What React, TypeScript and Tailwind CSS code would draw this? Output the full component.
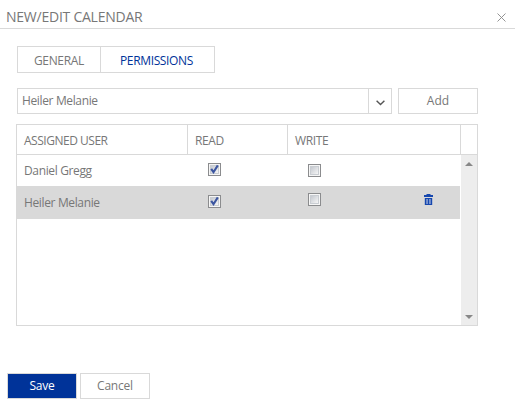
import React from "react";

const users = [
  { name: "Daniel Gregg", read: true, write: false, selected: false },
  { name: "Heiler Melanie", read: true, write: false, selected: true },
];

function Checkbox({ checked }: { checked: boolean }) {
  return (
    <svg width="13" height="13" viewBox="0 0 13 13" className="block" role="checkbox" aria-checked={checked}>
      <defs>
        <linearGradient id="well" x1="0" y1="0" x2="1" y2="1">
          <stop offset="0" stopColor="#c2c6cd" />
          <stop offset="1" stopColor="#f8f8f8" />
        </linearGradient>
      </defs>
      <rect x=".5" y=".5" width="12" height="12" fill="#f6f6f6" stroke="#8b8c8e" />
      <rect x="2.5" y="2.5" width="8" height="8" fill="url(#well)" stroke="#c9cdd2" />
      {checked && <path d="M3.2 5.8 L5.5 9.2 L9.8 2.4" fill="none" stroke="#3b55a0" strokeWidth="2.1" />}
    </svg>
  );
}

function TrashIcon() {
  return (
    <svg width="9" height="11" viewBox="0 0 9 11" className="block">
      <path d="M2.5 0h4v1H9v2H0V1h2.5z" fill="#1647ae" />
      <path d="M.8 4h7.4v7H.8z" fill="#1647ae" />
      <path d="M2.4 5h1.3v5H2.4zM5.3 5h1.3v5H5.3z" fill="#a3b4dc" />
    </svg>
  );
}

export default function App() {
  return (
    <div className="h-[409px] w-[515px] overflow-hidden bg-white font-['Open_Sans','Noto_Sans',sans-serif] text-[12px] leading-4 tracking-[-0.36px] whitespace-nowrap text-[#777777]">
      <header className="flex h-[29px] items-start justify-between border-b border-[#d9d9d9] pl-[6px] pr-[9px]">
        <h1 className="pt-[9px] text-[14px] leading-4 tracking-[-0.24px]">NEW/EDIT CALENDAR</h1>
        <svg width="9" height="9" viewBox="0 0 9 9" className="mt-[13px]">
          <path d="M.5 .5l8 8M8.5 .5l-8 8" stroke="#888" strokeWidth=".9" />
        </svg>
      </header>

      <div className="ml-[17px] mt-[17px] flex h-[27px] w-[198px] border border-[#d9d9d9]">
        <button className="flex w-[83px] items-center border-r border-[#d9d9d9] pl-[16px] pt-[2px]">GENERAL</button>
        <button className="flex flex-1 items-center pl-[19px] pt-[2px] text-[#003399]">PERMISSIONS</button>
      </div>

      <div className="ml-[17px] mt-[15px] flex h-[26px] gap-[6px]">
        <div className="flex w-[375px] border border-[#d9d9d9]">
          <span className="flex flex-1 items-center pl-[4px]">Heiler Melanie</span>
          <button className="flex w-[23px] items-center justify-center border-l border-[#d9d9d9] pt-[4px]">
            <svg width="9" height="6" viewBox="0 0 9 6">
              <path d="M.6 .8L4.5 4.6L8.4 .8" fill="none" stroke="#555" strokeWidth="1.4" />
            </svg>
          </button>
        </div>
        <button className="flex w-[80px] items-center justify-center border border-[#d9d9d9] tracking-normal">Add</button>
      </div>

      <div className="ml-[16px] mt-[10px] flex h-[202px] w-[462px] flex-col border border-[#d9d9d9]">
        <div className="flex h-[30px] border-b border-[#d9d9d9]">
          <div className="flex w-[171px] items-center border-r border-[#d9d9d9] pl-[7px] pt-[2px] tracking-[-0.48px]">ASSIGNED USER</div>
          <div className="flex w-[100px] items-center border-r border-[#d9d9d9] pl-[7px] pt-[2px]">READ</div>
          <div className="flex w-[173px] items-center border-r border-[#d9d9d9] pl-[7px] pt-[2px]">WRITE</div>
        </div>
        <div className="flex flex-1">
          <div className="w-[443px]">
            {users.map((u) => (
              <div key={u.name} className={u.selected ? "flex h-[33px] bg-[#d9d9d9]" : "flex h-[31px]"}>
                <div className="flex w-[171px] items-center pl-[7px]">{u.name}</div>
                <div className={u.selected ? "w-[100px] pl-[20px] pt-[9px]" : "w-[100px] pl-[20px] pt-[8px]"}>
                  <Checkbox checked={u.read} />
                </div>
                <div className={u.selected ? "w-[136px] pl-[20px] pt-[7px]" : "w-[136px] pl-[20px] pt-[9px]"}>
                  <Checkbox checked={u.write} />
                </div>
                {u.selected && (
                  <button className="self-start pt-[8px]">
                    <TrashIcon />
                  </button>
                )}
              </div>
            ))}
          </div>
          <div className="ml-px flex w-[16px] flex-col items-center justify-between bg-[#ededed] pb-[6px] pt-[7px]">
            <svg width="8" height="4" viewBox="0 0 8 4">
              <path d="M0 4L4 0l4 4z" fill="#888" />
            </svg>
            <svg width="8" height="4" viewBox="0 0 8 4">
              <path d="M0 0h8L4 4z" fill="#888" />
            </svg>
          </div>
        </div>
      </div>

      <footer className="ml-[7px] mt-[47px] flex h-[26px] gap-[3px] tracking-[-0.2px]">
        <button className="flex w-[70px] items-center justify-center border border-[#d9d9d9] bg-[#003399] text-white">Save</button>
        <button className="flex w-[70px] items-center justify-center border border-[#d9d9d9]">Cancel</button>
      </footer>
    </div>
  );
}
